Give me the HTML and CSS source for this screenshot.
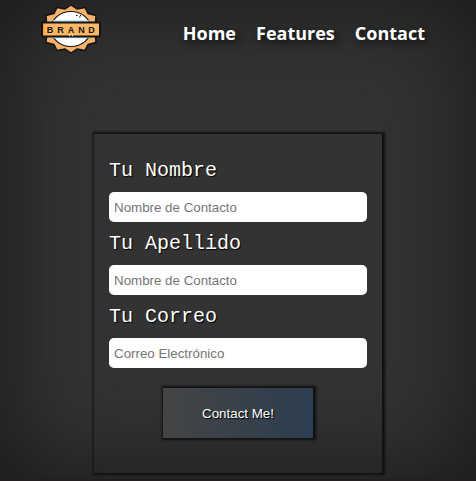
FILE: index.html
```html
<!DOCTYPE html>
<html lang="es">
<head>
<meta charset="utf-8">
<meta name="viewport" content="width=device-width, initial-scale=1">
<title>Brand</title>
<link rel="stylesheet" href="styles.css">
</head>
<body>
<div class="page">
  <header class="header">
    <a class="brand" href="#" aria-label="Brand">
      <svg class="logo" viewBox="0 0 60 52" role="img" aria-hidden="true">
        <path d="M30 1l6 4 8-1.500 3 6 8 2-.5 7 3.500 7-3.500 7 .5 6-8 2-3 6-8-1.500-6 4-6-4-8 1.500-3-6-8-2 .5-6-3.500-7 3.500-7-.5-7 8-2 3-6 8 1.500z" fill="#f5b26b" stroke="#17120f" stroke-width="1.500" stroke-linejoin="round"/>
        <ellipse cx="30" cy="25" rx="20" ry="17.500" fill="#fff" stroke="#17120f" stroke-width="1.200"/>
        <path d="M12 17h36M12 33.500h36" stroke="#a6dcf5" stroke-width="1.500"/>
        <path d="M35 11.500h1.500M38 13h1.500M39 11.500h1" stroke="#17120f" stroke-width="1"/>
        <rect x="1" y="18.500" width="58" height="14" rx="1" fill="#fab765" stroke="#17120f" stroke-width="2"/>
        <path d="M2.800 20v11" stroke="#ff9f2e" stroke-width="1.500"/>
        <path d="M28 31.500h1.200M31 31.500h1.200" stroke="#f2ede8" stroke-width="1.500"/>
        <text class="logo-text" y="28.500"><tspan x="9">B</tspan><tspan x="19.500">R</tspan><tspan x="30">A</tspan><tspan x="40.500">N</tspan><tspan x="50.500">D</tspan></text>
      </svg>
    </a>
    <nav class="nav">
      <a href="#">Home</a>
      <a href="#">Features</a>
      <a href="#">Contact</a>
    </nav>
  </header>
  <main class="main">
    <form class="card">
      <label for="nombre">Tu Nombre</label>
      <input id="nombre" type="text" placeholder="Nombre de Contacto">
      <label for="apellido">Tu Apellido</label>
      <input id="apellido" type="text" placeholder="Nombre de Contacto">
      <label for="correo">Tu Correo</label>
      <input id="correo" type="email" placeholder="Correo Electrónico">
      <button type="button">Contact Me!</button>
    </form>
  </main>
</div>
</body>
</html>
```
FILE: styles.css
```css
* {
  box-sizing: border-box;
}

body {
  margin: 0;
  background: #231f20;
  font-family: "Liberation Sans", Arial, sans-serif;
}

.page {
  margin-bottom: 2px;
  padding-bottom: 6px;
  background: #333;
  box-shadow: inset 0 0 100px #181818;
}

.header {
  display: flex;
  justify-content: space-between;
  padding: 4px 51px 0 41px;
}

.brand,
.logo {
  display: block;
  width: 60px;
  height: 52px;
}

.logo-text {
  font: bold 9px "Liberation Sans", Arial, sans-serif;
  fill: #17120f;
  text-anchor: middle;
}

.nav {
  display: flex;
  align-items: center;
  gap: 20px;
  padding-top: 6px;
}

.nav a {
  color: #fff;
  font: bold 18px/24px "Open Sans", "Noto Sans", sans-serif;
  text-decoration: none;
  text-shadow: 3px 3px 6px #111;
}

.main {
  padding-top: 78px;
}

.card {
  display: flex;
  flex-direction: column;
  width: 288px;
  margin: 0 auto;
  padding: 23px 15px 35px;
  box-shadow: 1px 0 2px 2px #111;
}

.card label {
  margin-bottom: 7px;
  color: #fff;
  font: 20px/28px "Liberation Mono", "Courier New", monospace;
  text-shadow: 1px 1px 1px #000;
}

.card input {
  width: 100%;
  height: 30px;
  margin-bottom: 8px;
  padding: 0 5px;
  border: 0;
  border-radius: 5px;
  background: #fff;
  font-family: "Liberation Sans", Arial, sans-serif;
}

.card input::placeholder {
  color: #757575;
}

.card button {
  align-self: center;
  width: 150px;
  height: 50px;
  margin-top: 12px;
  border: 0;
  background: linear-gradient(to right, #444, #2c3e50);
  box-shadow: 1px 0 2px 2px #111;
  color: #fff;
  font-family: "Liberation Sans", Arial, sans-serif;
  text-shadow: 1px 1px 1px #000;
}
```
